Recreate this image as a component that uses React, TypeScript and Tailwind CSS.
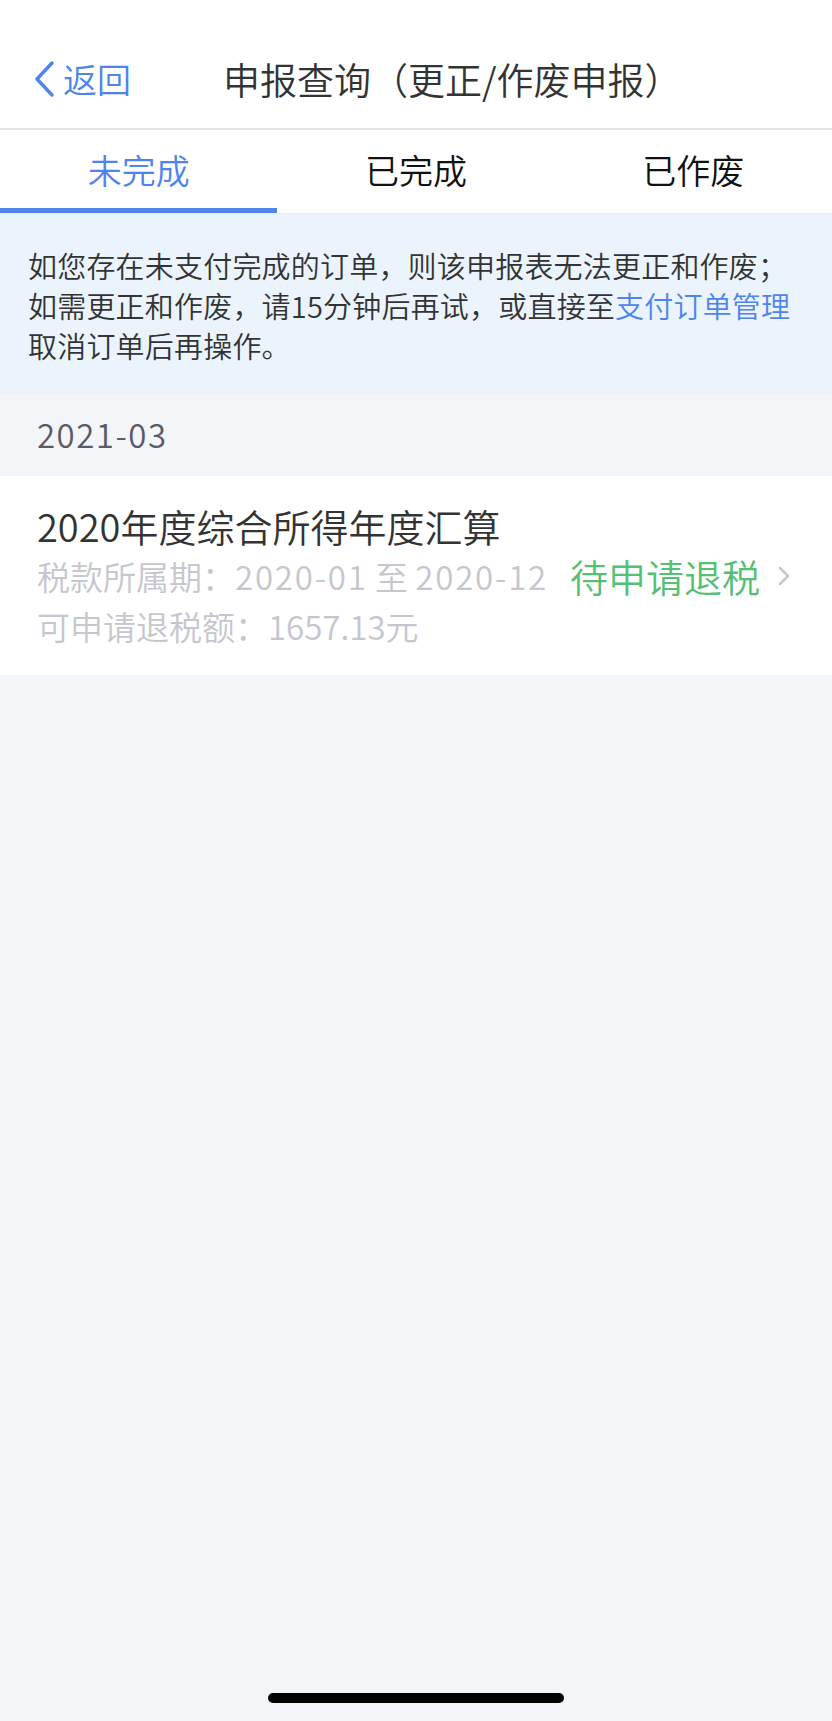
import React from "react";

const tabs = ["未完成", "已完成", "已作废"];

const BackIcon = () => (
  <svg width="22" height="36" viewBox="0 0 22 36" fill="none" className="shrink-0">
    <path d="M19 2 L4 18 L19 34" stroke="#4f84ec" strokeWidth="3.4" strokeLinecap="round" strokeLinejoin="round" />
  </svg>
);

const ChevronRight = () => (
  <svg width="12" height="20" viewBox="0 0 12 20" fill="none" className="shrink-0">
    <path d="M2 2 L10 10 L2 18" stroke="#c7c7cc" strokeWidth="2.6" strokeLinecap="round" strokeLinejoin="round" />
  </svg>
);

const App = () => {
  return (
    <div
      className="relative min-h-[1721px] bg-[#f4f5f9] flex flex-col font-[350]"
      style={{ fontFamily: '"Noto Sans CJK SC", "Noto Sans", sans-serif' }}
    >
      {/* nav bar */}
      <div className="h-[130px] pt-[30px] bg-white border-b-2 border-[#e2e2e7] flex items-center">
        <div className="flex items-center pl-[33px] gap-[8px] text-[#4f84ec] text-[34px] leading-none">
          <BackIcon />
          <span>返回</span>
        </div>
        <div className="ml-[92px] text-[37px] leading-none text-[#333333]">申报查询（更正/作废申报）</div>
      </div>

      {/* tabs */}
      <div className="bg-white flex border-b border-[#ececf0]">
        {tabs.map((t, i) => (
          <div key={t} className="flex-1 flex flex-col">
            <div
              className={
                "h-[78px] flex items-center justify-center text-[34px] " +
                (i === 0 ? "text-[#4f84ec]" : "text-[#111111]")
              }
            >
              {t}
            </div>
            <div className={"h-[5px] " + (i === 0 ? "bg-[#4f84ec]" : "bg-white")} />
          </div>
        ))}
      </div>

      {/* notice */}
      <div className="bg-[#ebf3fd] px-[28px] pt-[31px] pb-[29px] text-[29px] leading-[40px] text-[#333333] tracking-[0.2px]">
        如您存在未支付完成的订单，则该申报表无法更正和作废；
        <br />
        如需更正和作废，请15分钟后再试，或直接至<span className="text-[#4f84ec]">支付订单管理</span>
        <br />
        取消订单后再操作。
      </div>

      {/* month */}
      <div className="h-[82px] flex items-center px-[37px] text-[33px] tracking-[1.5px] text-[#5a5b66]">2021-03</div>

      {/* item */}
      <div className="bg-white flex items-center pl-[37px] pr-[42px] pt-[24px] pb-[24px]">
        <div className="flex-1 flex flex-col whitespace-nowrap">
          <div className="text-[38px] leading-[51px] text-[#333333]">2020年度综合所得年度汇算</div>
          <div className="text-[33px] leading-[50px] text-[#c6c6cf]">
            税款所属期：<span className="tracking-[1.8px]">2020-01</span> 至 <span className="tracking-[1.8px]">2020-12</span>
          </div>
          <div className="text-[33px] leading-[50px] text-[#c6c6cf]">可申请退税额：1657.13元</div>
        </div>
        <div className="flex items-center gap-[18px]">
          <span className="text-[38px] text-[#55bf74] whitespace-nowrap">待申请退税</span>
          <ChevronRight />
        </div>
      </div>

      <div className="flex-1" />

      {/* home indicator */}
      <div className="flex justify-center pb-[18px]">
        <div className="w-[296px] h-[10px] rounded-full bg-black" />
      </div>
    </div>
  );
};

export default App;
